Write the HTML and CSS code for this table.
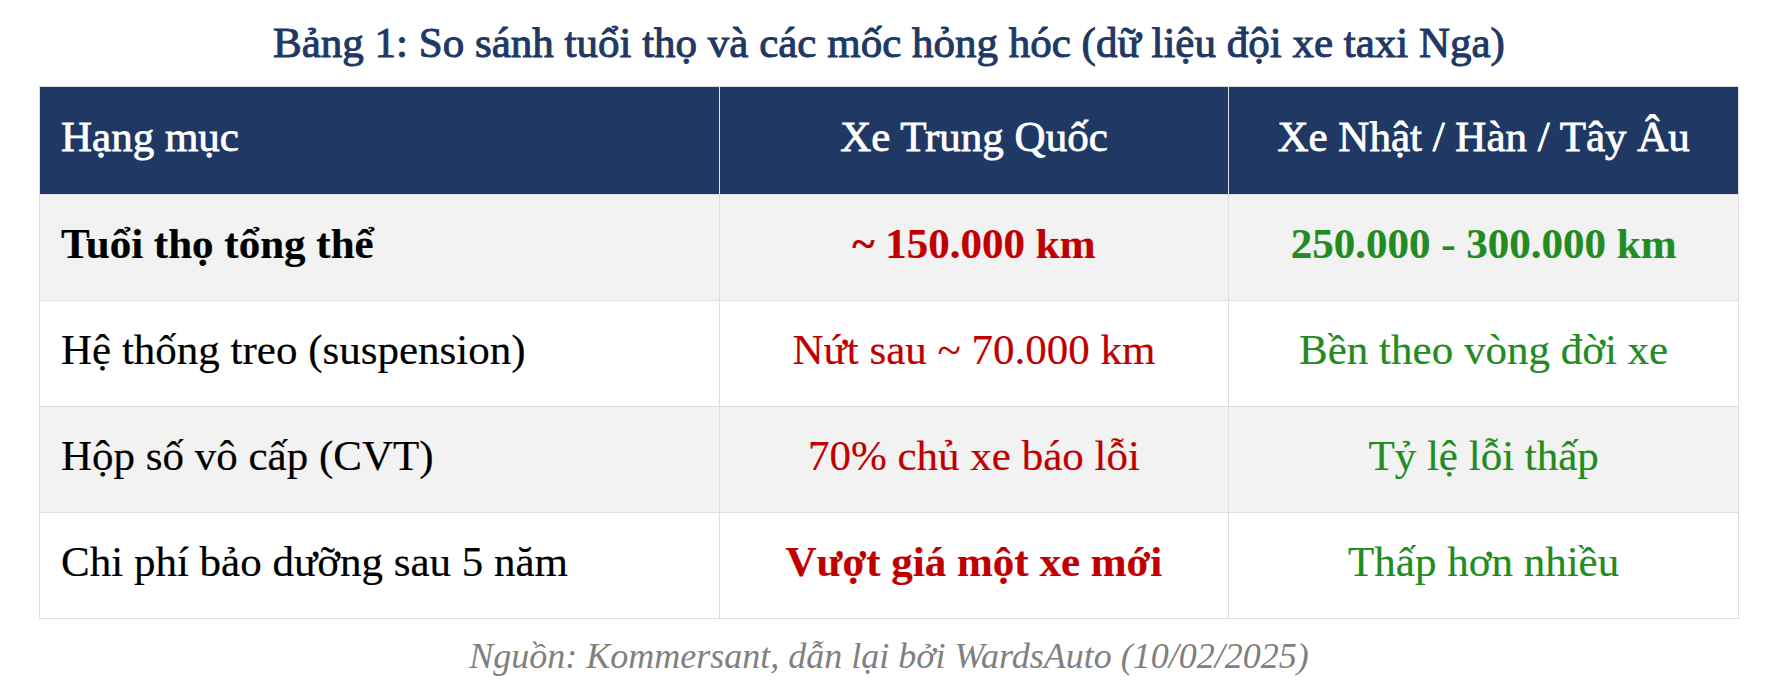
FILE: index.html
```html
<!DOCTYPE html>
<html lang="vi">
<head>
<meta charset="utf-8">
<title>Bảng 1</title>
<link rel="stylesheet" href="styles.css">
</head>
<body>
<div class="wrap">
  <h1 class="title">Bảng 1: So sánh tuổi thọ và các mốc hỏng hóc (dữ liệu đội xe taxi Nga)</h1>
  <table class="cmp">
    <colgroup>
      <col class="c1"><col class="c2"><col class="c3">
    </colgroup>
    <thead>
      <tr>
        <th class="left">Hạng mục</th>
        <th>Xe Trung Quốc</th>
        <th>Xe Nhật / Hàn / Tây Âu</th>
      </tr>
    </thead>
    <tbody>
      <tr class="alt">
        <td class="left strong">Tuổi thọ tổng thể</td>
        <td class="bad strong">~ 150.000 km</td>
        <td class="good strong">250.000 - 300.000 km</td>
      </tr>
      <tr>
        <td class="left">Hệ thống treo (suspension)</td>
        <td class="bad">Nứt sau ~ 70.000 km</td>
        <td class="good">Bền theo vòng đời xe</td>
      </tr>
      <tr class="alt">
        <td class="left">Hộp số vô cấp (CVT)</td>
        <td class="bad">70% chủ xe báo lỗi</td>
        <td class="good">Tỷ lệ lỗi thấp</td>
      </tr>
      <tr>
        <td class="left">Chi phí bảo dưỡng sau 5 năm</td>
        <td class="bad strong">Vượt giá một xe mới</td>
        <td class="good">Thấp hơn nhiều</td>
      </tr>
    </tbody>
  </table>
  <p class="source">Nguồn: Kommersant, dẫn lại bởi WardsAuto (10/02/2025)</p>
</div>
</body>
</html>
```

FILE: styles.css
```css
html, body {
  margin: 0;
  padding: 0;
  background: #ffffff;
}

body {
  font-family: "Liberation Serif", "Times New Roman", serif;
  color: #000000;
}

.wrap {
  width: 1700px;
  margin-left: 39px;
  padding-top: 18px;
}

.title {
  margin: 0 0 19px 0;
  font-size: 43px;
  font-weight: 400;
  line-height: 49px;
  color: #1f3864;
  text-align: center;
  -webkit-text-stroke: 1px #1f3864;
}

.cmp {
  width: 100%;
  border-collapse: collapse;
  table-layout: fixed;
  font-size: 43px;
  line-height: 49px;
}

.c1 { width: 40%; }
.c2 { width: 30%; }
.c3 { width: 30%; }

.cmp th,
.cmp td {
  border: 1px solid #dddddd;
  padding: 24px 21px 32px 21px;
  text-align: center;
  white-space: nowrap;
}

.cmp th {
  background: #1f3864;
  color: #ffffff;
  font-weight: 400;
  padding-top: 25px;
  padding-bottom: 33px;
  -webkit-text-stroke: 0.8px #ffffff;
}

.cmp td {
  -webkit-text-stroke: 0.2px currentColor;
}

.cmp .left {
  text-align: left;
}

.cmp tr.alt td {
  background: #f2f2f2;
}

.cmp .strong {
  font-weight: 700;
}

.cmp .bad {
  color: #c00000;
}

.cmp .good {
  color: #228b22;
}

.source {
  margin: 17px 0 0 0;
  font-size: 36px;
  line-height: 41px;
  font-style: italic;
  color: #808080;
  text-align: center;
}
```
